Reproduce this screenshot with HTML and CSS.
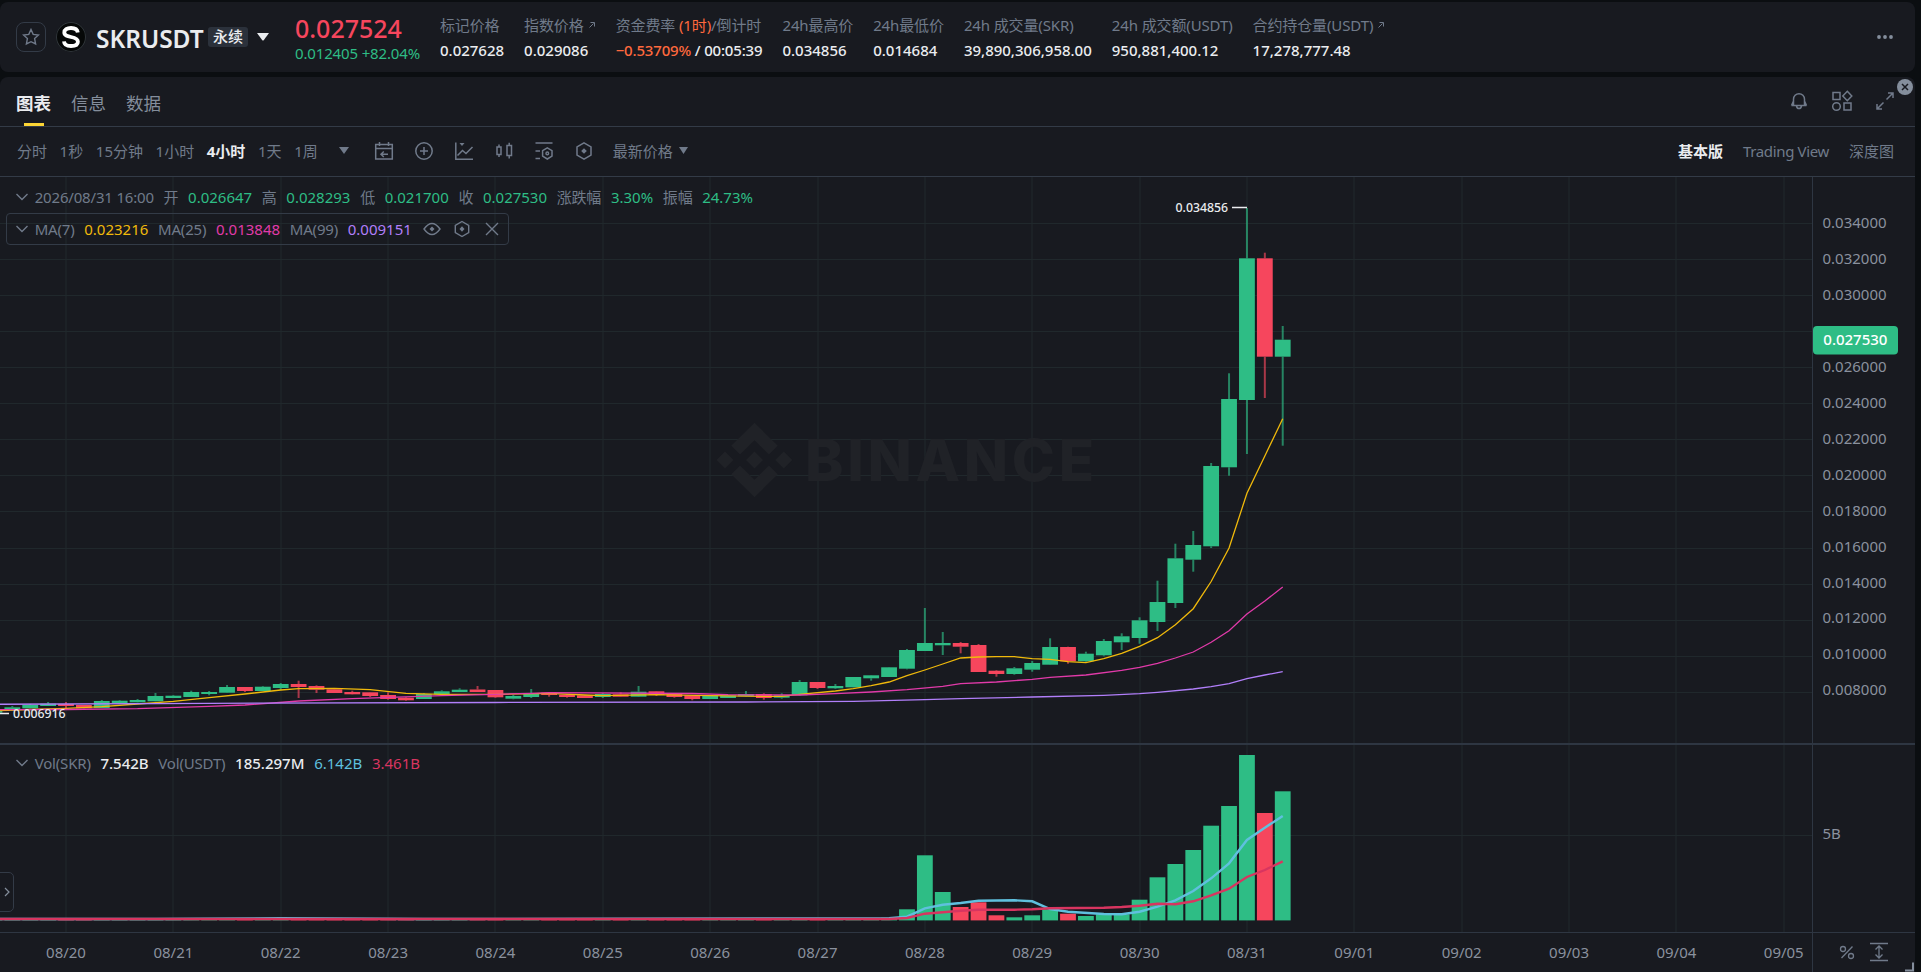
FILE: index.html
```html
<!doctype html>
<html lang="zh-CN">
<head>
<meta charset="UTF-8">
<title>SKRUSDT 永续</title>
<link rel="stylesheet" href="styles.css">
</head>
<body>
<header class="ticker">
<button class="star"><svg width="18" height="18" viewBox="0 0 18 18"><path d="M9 1.500l2.200 4.900 5.300.6-3.900 3.600 1 5.300L9 13.700l-4.600 2.200 1-5.300L1.500 7l5.300-.6z"/></svg></button>
<div class="coin"><svg width="30" height="30" viewBox="0 0 30 30"><path d="M21.800 10.500C21.400 7.500 18.500 6 15 6c-4 0-6.700 1.700-6.700 4.500 0 3 3 3.700 6.700 4.500s6.900 1.700 6.900 4.700S19 24 15 24s-6.800-1.500-7-4.700"/></svg></div>
<h1 class="symbol">SKRUSDT</h1>
<span class="tag">永续</span>
<svg class="symbol-caret" width="12" height="8" viewBox="0 0 12 8"><path d="M0 0h12L6.700 7.200q-.7.700-1.400 0z"/></svg>
<div class="stats">
<div class="price"><b class="down">0.027524</b><span class="up">0.012405 +82.04%</span></div>
<div class="stat"><span>标记价格</span><em>0.027628</em></div>
<div class="stat"><span>指数价格<svg class="ext" width="8" height="8" viewBox="0 0 8 8"><path d="M1.500 6.500l4-4M2.500 1.500h4v4"/></svg></span><em>0.029086</em></div>
<div class="stat funding"><span>资金费率 <i>(1时)</i>/倒计时</span><em><i>−0.53709%</i> / 00:05:39</em></div>
<div class="stat"><span>24h最高价</span><em>0.034856</em></div>
<div class="stat"><span>24h最低价</span><em>0.014684</em></div>
<div class="stat"><span>24h 成交量(SKR)</span><em>39,890,306,958.00</em></div>
<div class="stat"><span>24h 成交额(USDT)</span><em>950,881,400.12</em></div>
<div class="stat"><span>合约持仓量(USDT)<svg class="ext" width="8" height="8" viewBox="0 0 8 8"><path d="M1.500 6.500l4-4M2.500 1.500h4v4"/></svg></span><em>17,278,777.48</em></div>
</div>
<svg class="more" width="16" height="4" viewBox="0 0 16 4"><circle cx="2" cy="2" r="1.900"/><circle cx="8" cy="2" r="1.900"/><circle cx="14" cy="2" r="1.900"/></svg>
</header>

<main class="panel">
<nav class="tabs">
<a class="tab active">图表</a><a class="tab">信息</a><a class="tab">数据</a>
<div class="tab-icons">
<svg class="icon bell" width="20" height="20" viewBox="0 0 20 20"><path d="M2.500 14.500h15M4.500 14.500V8.200a5.500 5.500 0 0 1 11 0v6.300M4.500 10l-2 4.500M15.500 10l2 4.500M7.500 15q.6 2.600 2.500 2.600t2.500-2.600"/></svg>
<svg class="icon" width="22" height="22" viewBox="0 0 22 22"><path d="M2 2.500h7v7H2zM16.300 1.300l4.500 4.700-4.500 4.700L11.800 6zM13 13h7v7h-7z"/><circle cx="5.500" cy="16.500" r="3.800"/></svg>
<svg class="icon" width="20" height="20" viewBox="0 0 20 20"><path d="M11.500 8.500L17.500 2.500M13 2h5v5M8.500 11.500L2.500 17.500M2 13v5h5"/></svg>
</div>
<div class="close"><svg width="8" height="8" viewBox="0 0 8 8"><path d="M1 1l6 6M7 1L1 7"/></svg></div>
</nav>

<div class="toolbar">
<div class="intervals"><a>分时</a><a>1秒</a><a>15分钟</a><a>1小时</a><a class="active">4小时</a><a>1天</a><a>1周</a></div>
<svg class="caret more-intervals" width="10" height="7" viewBox="0 0 10 7"><path d="M0 0h10L5 7z"/></svg>
<div class="tools">
<svg class="icon" width="20" height="20" viewBox="0 0 20 20"><path d="M1.700 3.500h16.600v14.500H1.700zM1.700 7.500h16.600M5.500 1v4M14.500 1v4M14 13.200H7M9.800 10.500L7 13.200l2.800 2.800"/></svg>
<svg class="icon" width="20" height="20" viewBox="0 0 20 20"><circle cx="10" cy="10" r="8.200"/><path d="M10 6v8M6 10h8"/></svg>
<svg class="icon" width="20" height="20" viewBox="0 0 20 20"><path d="M1.800 1.500v16.700H19M3.500 14.500l5-5 3.500 3L18.500 6"/><path class="fill" d="M5.500 2h5L8 5z"/></svg>
<svg class="icon" width="20" height="20" viewBox="0 0 20 20"><path d="M3 6h4v7.500H3zM13 4.500h4.500v10H13zM5 3.500V6M5 13.500V16M15.200 1.800v2.700M15.200 14.500v3"/></svg>
<svg class="icon" width="20" height="20" viewBox="0 0 20 20"><path d="M1.500 2h17M1.500 10H6M1.500 17.500H6M13.300 6.800l4.700 2.900v5.400l-4.700 2.900-4.700-2.900V9.700z"/><circle cx="13.300" cy="12.400" r="1.300"/></svg>
<svg class="icon" width="20" height="20" viewBox="0 0 20 20"><path d="M10 1.800l7 4.100v8.200l-7 4.100-7-4.100V5.900z"/><path class="fill" d="M10 7.200l2.800 2.800-2.800 2.800L7.200 10z"/></svg>
</div>
<a class="last-price">最新价格<svg class="caret" width="9" height="7" viewBox="0 0 9 7"><path d="M0 0h9L4.500 7z"/></svg></a>
<div class="views"><a class="active">基本版</a><a class="tv">Trading View</a><a>深度图</a></div>
</div>

<div class="chart">
<svg id="plot" width="1915" height="795" viewBox="0 177 1915 795">
<g id="grid"></g>
<g class="watermark">
<path d="M754.500 422.700l23.300 23.100-8.900 8.700-14.400-14.200-14.400 14.200-8.900-8.700zM754.500 497.300l23.300-23.100-8.900-8.700-14.400 14.200-14.400-14.200-8.900 8.700zM754.500 451.500l8.500 8.500-8.500 8.500-8.500-8.500zM725 451.500l8.500 8.500-8.500 8.500-8.500-8.500zM783.700 451.500l8.500 8.500-8.500 8.500-8.500-8.500z"/>
<text x="805" y="481" textLength="289">BINANCE</text>
</g>
<g id="volume"></g>
<g id="candles"></g>
<g id="lines"></g>
<g class="frame"><path d="M1812.500 177v795M0 932.500h1915"/><path class="split" d="M0 744h1915"/></g>
<g class="marks"><path d="M1232 207.500h15M0 713.500h9"/><text x="1175.500" y="211.500">0.034856</text><text x="13" y="718">0.006916</text></g>
<g id="axis"></g>
<rect class="price-tag" x="1813" y="326" width="85" height="28.500" rx="4"/>
<text class="price-tag-text" x="1823.300" y="345">0.027530</text>
<g class="axis-icons"><path d="M1852.500 946.500l-11 11.500"/><circle cx="1843" cy="949" r="2.500"/><circle cx="1851" cy="956" r="2.500"/><path d="M1870 943.500h18M1870 960.500h18M1879 946.500v11M1875.500 949.500l3.500-3.500 3.500 3.500M1875.500 954.500l3.500 3.500 3.500-3.500"/></g>
<path class="corner" d="M1905 970.500h8V962.500"/>
</svg>

<div class="legend ohlc">
<svg class="icon" width="14" height="8" viewBox="0 0 14 8"><path d="M1.500 1L7 6.500 12.500 1"/></svg>
<span>2026/08/31 16:00</span><span>开</span><b class="up">0.026647</b><span>高</span><b class="up">0.028293</b><span>低</span><b class="up">0.021700</b><span>收</span><b class="up">0.027530</b><span>涨跌幅</span><b class="up">3.30%</b><span>振幅</span><b class="up">24.73%</b>
</div>
<div class="legend ma">
<svg class="icon" width="14" height="8" viewBox="0 0 14 8"><path d="M1.500 1L7 6.500 12.500 1"/></svg>
<span>MA(7)</span><b class="ma7">0.023216</b><span>MA(25)</span><b class="ma25">0.013848</b><span>MA(99)</span><b class="ma99">0.009151</b>
<div class="ma-icons">
<svg class="icon" width="18" height="18" viewBox="0 0 18 18"><path d="M1 9q4-5.500 8-5.500T17 9q-4 5.500-8 5.500T1 9z"/><path class="fill" d="M9 6.500L11.500 9 9 11.500 6.500 9z"/></svg>
<svg class="icon" width="18" height="18" viewBox="0 0 18 18"><path d="M9 1.500l6.700 3.900v7.200L9 16.500l-6.700-3.900V5.400z"/><path class="fill" d="M9 6.200L11.500 9 9 11.800 6.500 9z"/></svg>
<svg class="icon" width="18" height="18" viewBox="0 0 18 18"><path d="M3 3l12 12M15 3L3 15"/></svg>
</div>
</div>
<div class="legend vol">
<svg class="icon" width="14" height="8" viewBox="0 0 14 8"><path d="M1.500 1L7 6.500 12.500 1"/></svg>
<span>Vol(SKR)</span><b>7.542B</b><span>Vol(USDT)</span><b>185.297M</b><b class="cyan">6.142B</b><b class="red">3.461B</b>
</div>
<div class="handle"><svg width="6" height="10" viewBox="0 0 6 10"><path d="M1 1l4 4-4 4"/></svg></div>
</div>
</main>
<script src="chart.js"></script>
</body>
</html>
```

FILE: styles.css
```css
* { box-sizing: border-box; }

body {
  margin: 0;
  height: 972px;
  padding-top: 2px;
  overflow: hidden;
  background: #0b0e11;
  color: #eaecef;
  font: 15px/20px "Noto Sans", "Noto Sans CJK SC", sans-serif;
}

svg { display: block; flex: none; fill: none; }
a { white-space: nowrap; }
em, i { font-style: normal; }

.up { color: #2ebd85; }
.down { color: #f6465d; }

.icon {
  stroke: #707a8a;
  stroke-width: 1.5;
}
.icon .fill { fill: #707a8a; stroke: none; }

/* ticker */
.ticker {
  display: flex;
  align-items: center;
  width: 1915px;
  height: 70px;
  padding: 0 22px 0 16px;
  border-radius: 8px;
  background: #181a20;
}
.star {
  display: flex;
  align-items: center;
  justify-content: center;
  width: 30px;
  height: 30px;
  padding: 0;
  border: 1px solid #333b47;
  border-radius: 8px;
  background: none;
}
.star path { stroke: #707a8a; stroke-width: 1.4; }
.coin {
  margin-left: 10px;
  border-radius: 50%;
  background: #060808;
  box-shadow: inset 0 0 0 1px #30363b;
}
.coin path { stroke: #fff; stroke-width: 3.8; }
.symbol {
  margin: 3px 0 0 10px;
  width: 112px;
  font-size: 24.5px;
  font-weight: 600;
  letter-spacing: -.05px;
  line-height: 32px;
  white-space: nowrap;
}
.tag {
  width: 40px;
  border-radius: 3px;
  background: #2b313b;
  font-weight: 500;
  text-align: center;
  line-height: 20px;
  padding-bottom: 1px;
  margin-bottom: 1px;
  height: 20px;
  line-height: 19px;
}
.symbol-caret { margin-left: 9px; fill: #eaecef; }

.stats {
  display: flex;
  gap: 20px;
  margin-left: 26px;
  height: 54px;
  white-space: nowrap;
}
.price b {
  display: block;
  height: 34px;
  font-size: 25px;
  font-weight: 500;
  line-height: 36px;
}
.price span { display: block; letter-spacing: -.15px; line-height: 18px; }
.stat span { display: flex; height: 26px; line-height: 30px; color: #707a8a; white-space: pre; letter-spacing: -.12px; }
.stat em { display: block; font-weight: 500; line-height: 29px; }
.stat i { color: #ff693d; }
.funding em { letter-spacing: -.17px; }
.ext {
  margin: 11px 0 0 4px;
  stroke: #707a8a;
}
.more { margin-left: auto; fill: #848e9c; }

/* panel */
.panel {
  width: 1915px;
  height: 895px;
  margin-top: 5px;
  border-radius: 8px 8px 0 0;
  background: #181a20;
}
.tabs {
  position: relative;
  display: flex;
  gap: 20px;
  height: 50px;
  padding: 5px 20px 0 16px;
  border-bottom: 1px solid #333b47;
}
.tab {
  display: flex;
  flex-direction: column;
  align-items: center;
  justify-content: space-between;
  font-size: 17.5px;
  line-height: 43px;
  color: #848e9c;
}
.tab.active { color: #eaecef; font-weight: 700; }
.tab.active::after {
  content: "";
  flex: none;
  width: 20px;
  height: 3px;
  margin-top: -3px;
  background: #fcd535;
}
.tab-icons {
  display: flex;
  align-items: center;
  gap: 22px;
  margin-left: auto;
  height: 38px;
}
.close {
  position: absolute;
  right: 2px;
  top: 2px;
  width: 16px;
  height: 16px;
  padding: 4px;
  border-radius: 50%;
  background: #848e9c;
}
.close path { stroke: #181a20; stroke-width: 1.5; }

.toolbar {
  display: flex;
  align-items: center;
  height: 50px;
  padding: 0 21px 2px 17px;
  border-bottom: 1px solid #333b47;
  color: #707a8a;
}
.intervals { display: flex; gap: 12.6px; }
.toolbar .active { color: #eaecef; font-weight: 700; }
.caret { fill: #707a8a; }
.more-intervals { position: absolute; left: 339px; }
.tools { display: flex; gap: 20px; margin-left: 56px; }
.last-price { display: flex; align-items: center; gap: 6px; margin-left: 19px; }
.views { display: flex; gap: 20px; margin-left: auto; }
.tv { letter-spacing: -.35px; }

/* chart */
.chart { position: relative; height: 795px; }
#grid { stroke: #20282c; stroke-width: 1; }
.frame { stroke: #2e3642; }
.split { stroke-width: 2; }
.watermark { fill: #202227; }
.watermark text { font: 800 58px Inter, sans-serif; }
#axis { font-size: 15px; fill: #8a919e; }
#axis .date { text-anchor: middle; }
.c-up { fill: #2ebd85; stroke: #2ebd85; }
.c-down { fill: #f6465d; stroke: #f6465d; }
#candles rect, #volume rect { stroke: none; }
#candles line { stroke-width: 2; stroke-opacity: .65; }
#lines { stroke-width: 1.3; }
#lines .thick { stroke-width: 2.4; }
.marks { stroke: #eaecef; stroke-width: 1.4; }
.marks text { font-size: 12.3px; font-weight: 500; fill: #eaecef; stroke: none; }
.price-tag { fill: #2ebd85; }
.price-tag-text { fill: #fff; font-size: 15px; font-weight: 500; }
.axis-icons { stroke: #707a8a; stroke-width: 1.3; }
.corner { stroke: #848e9c; stroke-width: 2; }

.legend {
  position: absolute;
  left: 15px;
  display: flex;
  align-items: center;
  gap: 9.7px;
  color: #707a8a;
  white-space: nowrap;
}
.legend .icon { stroke-width: 1.4; }
.legend > .icon { margin-right: -4px; }
.legend span { letter-spacing: -.18px; }
.legend b { font-weight: 400; }
.ohlc { top: 10px; }
.ma {
  top: 36px;
  left: 6px;
  width: 503px;
  height: 32px;
  padding-left: 8px;
  border: 1px solid #333b47;
  border-radius: 4px;
}
.ma-icons { display: flex; gap: 12px; margin-left: 1px; }
.vol { top: 576px; }
.legend.vol b { font-weight: 500; color: #eaecef; }
.legend .ma7 { color: #f0b90b; }
.legend .ma25 { color: #e13aa9; }
.legend .ma99 { color: #b17ffa; }
.legend.vol .cyan { color: #5fc0de; font-weight: 400; }
.legend.vol .red { color: #d83560; font-weight: 400; }

.handle {
  position: absolute;
  left: -1px;
  top: 695px;
  display: flex;
  align-items: center;
  justify-content: center;
  width: 15px;
  height: 40px;
  border: 1px solid #333b47;
  border-radius: 0 5px 5px 0;
  background: #181a20;
}
.handle path { stroke: #848e9c; stroke-width: 1.2; }
```

FILE: chart.js
```js
const STEP = 17.893, X0 = 66, BASE = 920.4;
const x = i => X0 + i * STEP;

// direction, body top, body bottom, high, low; first candle is index -4
const candles = [
['u',710.3,712.7,710,713],['u',707.3,710,706,711],['u',705,708.3,704,708],['u',703.7,706,702,706],
['d',704,706,702,708],['d',705,708.3,705,708],['u',701,708,700,708],['u',700.7,703.3,700,703],
['u',700,702.3,699,702],['u',696,701.3,693,701],['u',695.7,698,695,698],['u',692,697,690.7,697],
['u',692,694,691,695.3],['u',687,692.7,685,693],['d',687,691,687,692],['u',686.7,691,686,691],
['u',684,688,683,690],['d',684,687,680.7,698],['d',686,689.7,685.3,693],['d',689.3,693,689,693],
['d',692,694.3,690.7,694],['d',692.3,696,692,697],['d',695,699,692.3,699.7],['d',697.7,700.3,697,701],
['u',694,699,693,699],['u',691.3,694.3,690.3,694],['u',689.7,692,688.3,692],['d',689.5,692,686,692],
['d',690,697.3,690,698],['u',696,698.7,695,699.3],['u',693,697,689,698],['d',692.7,695,692,696.7],
['d',694.7,697,694,697.7],['d',695.3,698,695,698],['u',694,697,693,698],['d',694.3,696.7,692.3,697],
['u',691.7,696.7,686,697],['d',691.3,695,691,696],['d',694,697,694,697.7],['d',695.3,699,695,700.3],
['u',695.3,699,695,699],['u',695.3,698,695,698],['u',694,696.3,691,696],['d',694,698,693.3,699.7],
['u',695.3,697.7,693.3,698.7],['u',682,695.3,680,696],['d',682,688,682,689],['u',686,688.3,684,689],
['u',677,687.3,677,687],['u',675.3,678.3,675,680.7],['u',667.3,677,667,677],['u',650,668.7,649,669.3],
['u',643,651,608,651],['u',643,645.3,632,655],['d',643,646.7,642,653.3],['d',645,672,644,672],
['d',670.7,674,670,676.7],['u',668.3,674,667,674.7],['u',663,669.7,661,671.7],['u',647,664.7,638.3,665],
['d',647,661.3,646.7,663.7],['u',653.7,661.3,651.7,662],['u',641,655.3,639,656.3],['u',636.3,642.3,633.3,650],
['u',620.3,638,617.3,643.7],['u',602,622,580.7,631],['u',558.3,603,543.7,608],['u',545,559.7,531,571.7],
['u',466,546.3,463,548],['u',399,467.3,373.3,475.7],['u',258.3,400,208,454],['d',258.3,356.7,252.7,398],
['u',339.7,356.7,326,445.7]
];

// tops of the volume bars from index 46 on, the earlier ones are flat
const volTops = [917.7,909.3,855.3,892,907,902.3,915.3,917.3,915.3,909.3,913.7,916,914.3,914.3,899.7,877.3,864,850,825.7,806,755,813,791.3];

const lines = [
{color: '#f0b90b', pts: [[-4,710.7],[-2,709.5],[0,708.3],[2,706.7],[4,704],[6,701.3],[8,697.7],[10,694],[12,690],[13,688.7],[15,688.3],[17,689.7],[19,693.3],[21,694.3],[24,694.3],[27,693.3],[29,695],[30,695.7],[33,694.7],[36,695.7],[39,696.3],[40,696.3],[41,694.3],[43,691],[44,688.7],[45,685.7],[46,682],[47,675.7],[48,670],[49,664],[50,658],[51,657],[52,656.7],[53,656.7],[54,658.7],[55,659.3],[56,661.7],[57,662.7],[58,658.7],[59,653.3],[60,646.3],[61,637.7],[62,624.7],[63,608.7],[64,581.5],[65,548],[66,493.3],[67,456],[68,418.7]]},
{color: '#e13aa9', pts: [[-4,709.7],[0,709.5],[4,708.7],[8,706.3],[10,705],[13,701],[16,698.7],[21,695.7],[24,694.3],[26,693.3],[27,692.7],[35,693.5],[37,694.7],[41,695],[43,693.7],[45,692],[47,689.7],[49,686.3],[50,683.7],[52,682],[54,679.3],[55,677.3],[57,675],[59,670.3],[60,667.3],[61,663.3],[62,658],[63,652],[64,642.3],[65,630.7],[66,614],[67,601],[68,587]]},
{color: '#b17ffa', pts: [[-4,704.3],[8,703.3],[24,702.5],[38,702],[44,701.3],[48,699.7],[50,698.7],[54,697],[58,695.3],[60,693.7],[61,692.3],[63,689],[64,686.7],[65,683.7],[66,678.7],[67,675],[68,671.7]]},
{color: '#5fc0de', thick: true, pts: [[-4,919],[5,919],[12,918.3],[20,919],[46,918.3],[47,916.7],[48,908.3],[49,904.7],[50,903],[51,900.7],[53,900.3],[54,901.3],[55,909],[56,911.7],[58,914],[59,914.3],[60,911.7],[61,906.7],[62,900.3],[63,891],[64,878.3],[65,863.3],[66,840],[67,827.7],[68,816]]},
{color: '#d83560', thick: true, pts: [[-4,919],[46,919],[47,918],[48,913.7],[50,910.7],[51,909.7],[53,909.7],[54,909.3],[55,908.3],[58,907.7],[59,907],[60,905.7],[61,903.7],[62,904.3],[63,901.3],[64,895.3],[65,888.7],[66,877],[67,870],[68,861.3]]}
];

let grid = '', axis = '';
for (let k = 0; k < 14; k++) {
	const y = 223.3 + k * 36.08;
	grid += `<path d="M0 ${Math.floor(y) + .5}H1812"/>`;
	axis += `<text x="1822.500" y="${227.7 + k * 35.98}">${(0.034 - k * 0.002).toFixed(6)}</text>`;
}
grid += '<path d="M0 835.5H1812"/>';
axis += '<text x="1822.500" y="838.5">5B</text>';
['08/20','08/21','08/22','08/23','08/24','08/25','08/26','08/27','08/28','08/29','08/30','08/31','09/01','09/02','09/03','09/04','09/05'].forEach((d, k) => {
	const gx = X0 + k * 107.36;
	grid += `<path d="M${Math.round(gx)} 177V932"/>`;
	axis += `<text class="date" x="${gx}" y="957.7">${d}</text>`;
});

let bars = '', vols = '';
candles.forEach(([dir, top, bottom, high, low], n) => {
	const i = n - 4, cls = dir == 'u' ? 'c-up' : 'c-down', left = x(i) - 7.9;
	bars += `<g class="${cls}"><line x1="${x(i)}" x2="${x(i)}" y1="${high}" y2="${top}"/><line x1="${x(i)}" x2="${x(i)}" y1="${bottom}" y2="${low}"/><rect x="${left}" y="${top}" width="15.800" height="${bottom - top}"/></g>`;
	const v = i < 46 ? 918.6 : volTops[i - 46];
	vols += `<rect class="${cls}" x="${left}" y="${v}" width="15.800" height="${BASE - v}"/>`;
});

document.querySelector('#grid').innerHTML = grid;
document.querySelector('#axis').innerHTML = axis;
document.querySelector('#candles').innerHTML = bars;
document.querySelector('#volume').innerHTML = vols;
document.querySelector('#lines').innerHTML = lines.map(l =>
	`<polyline class="${l.thick ? 'thick' : ''}" stroke="${l.color}" points="${l.pts.map(p => x(p[0]) + ',' + p[1]).join(' ')}"/>`).join('');
```
